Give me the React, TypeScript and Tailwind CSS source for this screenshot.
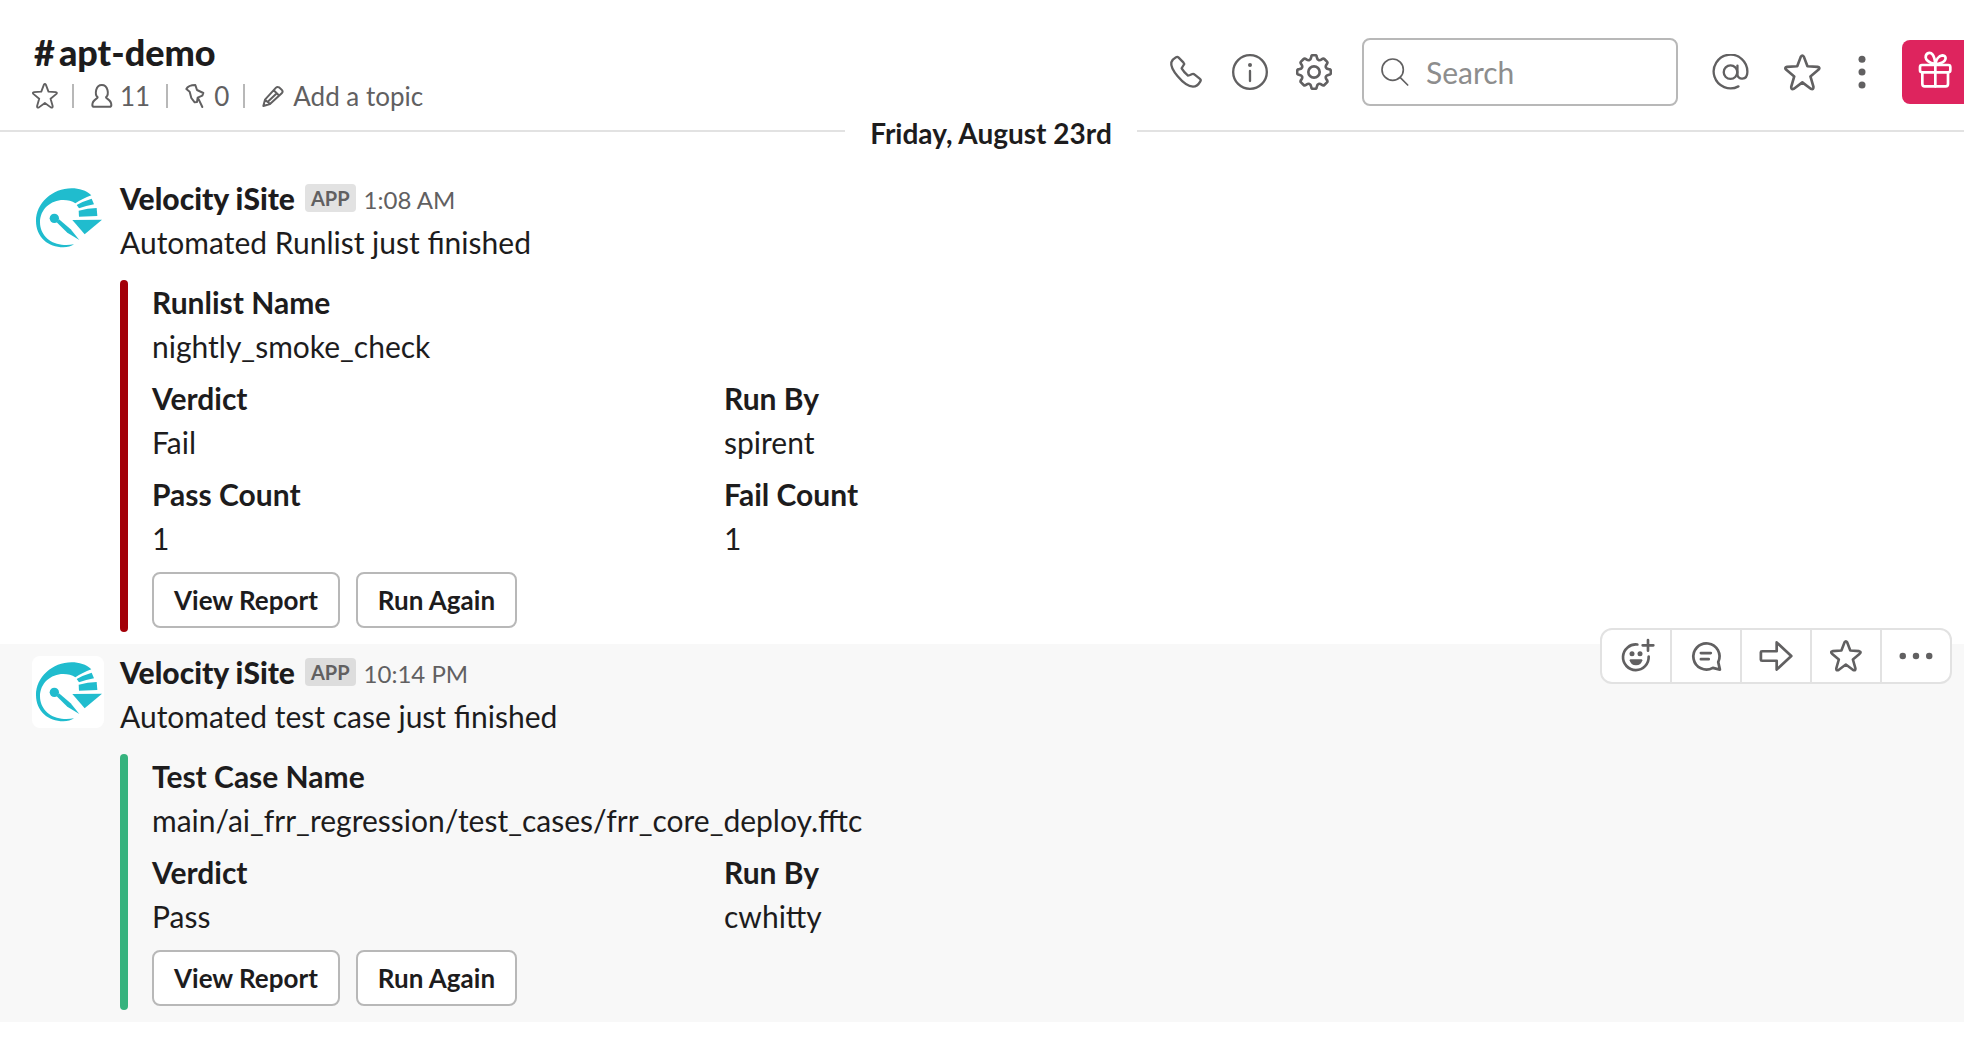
import React from "react";

type IconProps = { box: string; className: string; width?: number; children: React.ReactNode };

function Icon({ box, className, width = 7, children }: IconProps) {
  return (
    <svg
      viewBox={box}
      className={className}
      fill="none"
      stroke="currentColor"
      strokeWidth={width}
      strokeLinecap="round"
      strokeLinejoin="round"
      aria-hidden="true"
    >
      {children}
    </svg>
  );
}

function Star({ className, width }: { className: string; width: number }) {
  return (
    <Icon box="732 100 112 112" className={className} width={width}>
      <path d="M783 108 Q787.500 101 792 108 L803 137 L834 139 Q843 141 836 148 L812 168 L821 199 Q822 209 813 205 L787.500 186 L762 205 Q753 209 754 199 L763 168 L739 148 Q732 141 741 139 L772 137 Z" />
    </Icon>
  );
}

function Logo() {
  return (
    <svg viewBox="36 48 216 216" className="mt-1.5 size-18 shrink-0 rounded-lg bg-white" fill="#20bcce" aria-label="Velocity iSite" role="img">
      <path d="M214 88 C198 73 178 67 155 67 C97 67 48 112 48 165 C48 214 85 244 130 244 C143 244 154 240 162 235 C150 237 137 238 125 236 C86 232 60 204 60 169 C60 130 92 102 130 102 C144 102 156 105 166 112 C180 103 196 95 214 88 Z" />
      <path d="M170 117 Q191 105 215 98 L222 115 Q198 119 177 127 Z" />
      <path d="M176 134 Q203 127 230 126 L232 150 L177 152 Z" />
      <path d="M157 162 L246 161 L194 205 Z" />
      <circle cx="103" cy="157" r="14" />
      <path d="M110 169 L117 160 L152 190 L178 222 L142 200 Z" />
    </svg>
  );
}

type Field = { label: string; value: string; wide?: boolean };

type MessageProps = {
  time: string;
  text: string;
  fields: Field[];
  bar: string;
  active?: boolean;
};

function Message({ time, text, fields, bar, active }: MessageProps) {
  return (
    <article className={active ? "relative flex gap-4 bg-[#f8f8f8] px-8 pt-1.5 pb-3" : "relative flex gap-4 px-8 pt-1.5 pb-3"}>
      <Logo />
      <div className="min-w-0 flex-1">
        <div className="flex h-11 items-center">
          <h2 className="font-black">Velocity iSite</h2>
          <span
            className={`ml-2.5 flex h-7 items-center rounded px-1.5 text-[20px] font-bold text-[#616061] ${active ? "bg-[#dddddd]" : "bg-[#e2e2e2]"}`}
          >
            APP
          </span>
          <time className="ml-2 pt-1 text-[24px] text-[#616061]">{time}</time>
        </div>
        <p>{text}</p>
        <div className="mt-4 flex gap-6">
          <div className={`w-2 shrink-0 rounded-full ${bar}`} />
          <div className="min-w-0 flex-1 pb-1">
            <dl className="grid max-w-[1144px] grid-cols-2 gap-y-2">
              {fields.map((f) => (
                <div key={f.label} className={f.wide ? "col-span-2" : ""}>
                  <dt className="font-bold">{f.label}</dt>
                  <dd>{f.value}</dd>
                </div>
              ))}
            </dl>
            <div className="mt-3 flex gap-4">
              <button className="h-14 rounded-lg border-2 border-[#b8b8b8] bg-white px-5 text-[26px] leading-8 font-bold">View Report</button>
              <button className="h-14 rounded-lg border-2 border-[#b8b8b8] bg-white px-5 text-[26px] leading-8 font-bold">Run Again</button>
            </div>
          </div>
        </div>
      </div>
      {active && <Actions />}
    </article>
  );
}

function Actions() {
  const cell = "flex w-[70px] items-center justify-center last:w-[68px]";
  return (
    <div className="absolute -top-4 right-3 flex h-14 divide-x-2 divide-[#e2e2e2] rounded-xl border-2 border-[#e2e2e2] bg-white text-[#616061]">
      <button aria-label="Add reaction" className={cell}>
        <Icon box="111 84 114 106" className="h-9 w-[38px]" width={8}>
          <path d="M172 102.500 A38.500 38.500 0 1 0 206 139 M204 89 V121 M188 105 H220" />
          <circle cx="156" cy="130" r="7.500" fill="currentColor" stroke="none" />
          <circle cx="180" cy="130" r="7.500" fill="currentColor" stroke="none" />
          <path d="M149 150 Q149 147 152 147 H184 Q187 147 187 150 Q184 165 168 165 Q152 165 149 150 Z" fill="currentColor" stroke="none" />
        </Icon>
      </button>
      <button aria-label="Start a thread" className={cell}>
        <Icon box="325 86 106 106" className="size-9" width={8}>
          <path d="M398 174 A38.500 38.500 0 1 1 414 157 L419 179 Z M363 130.500 H392 M363 148.500 H386" />
        </Icon>
      </button>
      <button aria-label="Share message" className={cell}>
        <Icon box="535 85 106 106" className="size-9" width={8}>
          <path d="M543.500 127 Q543.500 124 547 124 H590 V98 L633 138 L590 178 V152 H547 Q543.500 152 543.500 149 Z" />
        </Icon>
      </button>
      <button aria-label="Save message" className={cell}>
        <Star className="size-8" width={9} />
      </button>
      <button aria-label="More actions" className={cell}>
        <Icon box="955 85 106 106" className="size-9">
          <g fill="currentColor" stroke="none">
            <circle cx="969" cy="138" r="9.500" />
            <circle cx="1008" cy="138" r="9.500" />
            <circle cx="1047" cy="138" r="9.500" />
          </g>
        </Icon>
      </button>
    </div>
  );
}

function Header() {
  const rule = "h-6 w-0.5 bg-[#b8b8b8]";
  return (
    <header className="flex h-33 items-center justify-between border-b-2 border-[#e2e2e2]">
      <div className="pt-[18px] pl-8">
        <h1 className="flex gap-1 pl-0.5 text-[36px] leading-11 font-black">
          <span>#</span>
          <span>apt-demo</span>
        </h1>
        <div className="flex h-11 items-center text-[26px] text-[#616061]">
          <button aria-label="Star channel">
            <Star className="size-[26px]" width={8} />
          </button>
          <span className={`ml-3.5 ${rule}`} />
          <button className="ml-4 flex items-center gap-1.5">
            <Icon box="270 192 70 78" className="h-[26px] w-6" width={6}>
              <path d="M292 235 C282 226 286 198 304.500 198 C323 198 327 226 317 235 C317 240 333 241 333 258 Q333 263.500 328 263.500 H281 Q276 263.500 276 258 C276 241 292 240 292 235 Z" />
            </Icon>
            11
          </button>
          <span className={`ml-4 ${rule}`} />
          <button className="ml-4 flex items-center gap-2">
            <Icon box="549 192 66 78" className="h-[26px] w-[22px]" width={6}>
              <path d="M583 198 L588 213 L607 222 L604 230 L590 236 L588 249 L581 250 L571 237 L566 218 L556 210 Q562 198 583 198 Z M592 239 L604 264" />
            </Icon>
            0
          </button>
          <span className={`ml-3.5 ${rule}`} />
          <button className="ml-4 flex items-center gap-2">
            <Icon box="784 194 72 72" className="size-6" width={6}>
              <path d="M791 260 L796 241 L829 205 Q833 201 838 204 L846 211 Q851 216 847 221 L811 254 Z M822 213 L839 229 M796 241 L811 254 M829 224 L806 246" />
            </Icon>
            Add a topic
          </button>
        </div>
      </div>
      <div className="flex items-center pt-3.5 text-[#616061]">
        <button aria-label="Call">
          <Icon box="84 102 108 108" className="size-9">
            <path d="M108 112 Q112 109 116 113 L130 127 Q134 131 131 135 Q126 143 125 145 Q132 157 144 167 Q148 167 155 163 Q160 160 164 164 L179 176 Q184 180 181 184 Q172 200 159 200 Q138 199 113 169 Q91 143 94 127 Q97 118 108 112 Z" />
          </Icon>
        </button>
        <button aria-label="Channel details" className="ml-7">
          <Icon box="276 102 108 108" className="size-9">
            <circle cx="330" cy="156" r="50.500" />
            <path d="M330 153 V183" />
            <circle cx="330" cy="135" r="6" fill="currentColor" stroke="none" />
          </Icon>
        </button>
        <button aria-label="Settings" className="ml-7">
          <Icon box="468 102 108 108" className="size-9" width={8}>
            <circle cx="522" cy="156" r="17" />
            <path d="M513.500 112 Q514 105.500 518 105.500 H526 Q530 105.500 530.500 112 C532 121 538 123 545 118 Q550 114 553 117 L561 125 Q564 128 560 133 C555 140 557 146 566 147.500 Q572.500 148 572.500 152 V160 Q572.500 164 566 164.500 C557 166 555 172 560 179 Q564 184 561 187 L553 195 Q550 198 545 194 C538 189 532 191 530.500 200 Q530 206.500 526 206.500 H518 Q514 206.500 513.500 200 C512 191 506 189 499 194 Q494 198 491 195 L483 187 Q480 184 484 179 C489 172 487 166 478 164.500 Q471.500 164 471.500 160 V152 Q471.500 148 478 147.500 C487 146 489 140 484 133 Q480 128 483 125 L491 117 Q494 114 499 118 C506 123 512 121 513.500 112 Z" />
          </Icon>
        </button>
        <label className="ml-[30px] flex h-17 w-[316px] items-center rounded-lg border-2 border-[#b8b8b8] pl-[17px]">
          <Icon box="723 118 84 84" className="size-7 shrink-0" width={5}>
            <circle cx="758" cy="153" r="32" />
            <path d="M781 177 L803 199" />
          </Icon>
          <input type="text" aria-label="Search" placeholder="Search" className="ml-[17px] w-full min-w-0 bg-transparent text-[30px] outline-none placeholder:text-[#8d8d8d]" />
        </label>
        <button aria-label="Mentions" className="ml-[34px]">
          <Icon box="516 101 112 112" className="size-[37px]">
            <path d="M596 199 A51 51 0 1 1 623 156 C623 181 593 181 593 162 V136" />
            <circle cx="572" cy="156" r="20.500" />
          </Icon>
        </button>
        <button aria-label="Starred items" className="ml-[35px]">
          <Star className="size-[37px]" width={8} />
        </button>
        <button aria-label="More" className="ml-9">
          <Icon box="952 102 30 108" className="h-9 w-2.5">
            <g fill="currentColor" stroke="none">
              <circle cx="967" cy="118" r="10.500" />
              <circle cx="967" cy="156" r="10.500" />
              <circle cx="967" cy="195" r="10.500" />
            </g>
          </Icon>
        </button>
        <button aria-label="What's new" className="ml-[35px] flex h-16 w-[62px] items-center rounded-l-lg bg-[#de245e] pb-1 pl-4 text-white">
          <Icon box="1132 94 102 114" className="h-[38px] w-[34px]" width={8}>
            <path d="M1145 160 V193 Q1145 200 1152 200 H1215 Q1222 200 1222 193 V160" />
            <rect x="1138" y="136" width="91" height="22" rx="6" />
            <path d="M1184 134 V200 M1184 134 C1176 131 1156 127 1155 113 C1155 99 1169 96 1176 105 C1182 113 1183 124 1184 134 C1186 120 1194 108 1205 107 C1215 107 1217 116 1212 123 C1207 129 1195 133 1184 134" />
          </Icon>
        </button>
      </div>
    </header>
  );
}

export default function App() {
  return (
    <main className="min-h-screen bg-white font-['Lato',sans-serif] text-[30px] leading-11 text-[#1d1c1d]">
      <Header />
      <div className="relative -mt-5 mb-4 flex justify-center pl-[18px]">
        <h2 className="flex h-[42px] items-center bg-white px-[25px] text-[28px] font-bold">Friday, August 23rd</h2>
      </div>
      <Message
        time="1:08 AM"
        text="Automated Runlist just finished"
        bar="bg-[#a30008]"
        fields={[
          { label: "Runlist Name", value: "nightly_smoke_check", wide: true },
          { label: "Verdict", value: "Fail" },
          { label: "Run By", value: "spirent" },
          { label: "Pass Count", value: "1" },
          { label: "Fail Count", value: "1" },
        ]}
      />
      <Message
        active
        time="10:14 PM"
        text="Automated test case just finished"
        bar="bg-[#36b37e]"
        fields={[
          { label: "Test Case Name", value: "main/ai_frr_regression/test_cases/frr_core_deploy.fftc", wide: true },
          { label: "Verdict", value: "Pass" },
          { label: "Run By", value: "cwhitty" },
        ]}
      />
    </main>
  );
}
